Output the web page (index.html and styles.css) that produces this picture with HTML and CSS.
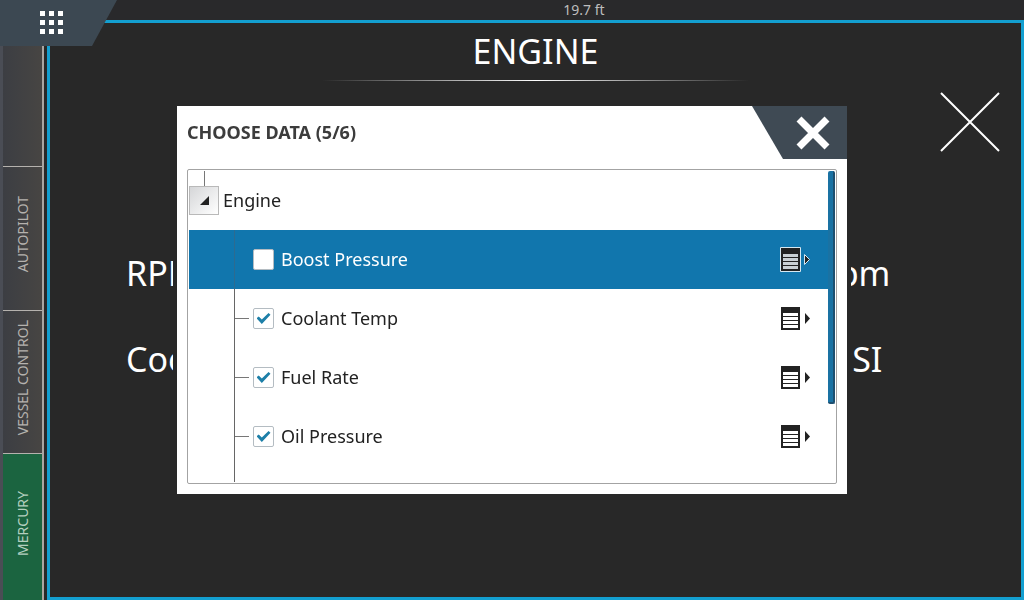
FILE: index.html
```html
<!DOCTYPE html>
<html lang="en">
<head>
    <meta charset="UTF-8">
    <meta name="viewport" content="width=device-width, initial-scale=1">
    <title>Engine</title>
    <link rel="stylesheet" href="styles.css">
</head>
<body>
<header class="top-bar">
    <span class="depth">19.7 ft</span>
</header>
<button class="menu-btn" type="button" aria-label="Menu">
    <svg width="24" height="24" viewBox="0 0 24 24" fill="#fff">
        <path d="M0 0h5v5H0zM9 0h5v5H9zM18 0h5v5h-5zM0 9h5v5H0zM9 9h5v5H9zM18 9h5v5h-5zM0 18h5v5H0zM9 18h5v5H9zM18 18h5v5h-5z"/>
    </svg>
</button>

<div class="screen">
    <nav class="sidebar">
        <span class="tab"></span>
        <button class="tab" type="button"><span>AUTOPILOT</span></button>
        <button class="tab" type="button"><span>VESSEL CONTROL</span></button>
        <button class="tab tab-mercury" type="button"><span>MERCURY</span></button>
    </nav>

    <main class="panel">
        <h1>ENGINE</h1>
        <div class="title-line"></div>
        <button class="panel-close" type="button" aria-label="Close panel">
            <svg width="60" height="60" viewBox="0 0 60 60" stroke="#fff" stroke-width="2">
                <path d="M1 1L59 59M59 1L1 59"/>
            </svg>
        </button>
        <div class="readings">
            <span>RPM</span><span class="unit">rpm</span>
            <span>Coolant</span><span class="unit">PSI</span>
        </div>
    </main>
</div>

<div class="overlay">
    <section class="dialog" role="dialog" aria-labelledby="dialog-title">
        <div class="dialog-head">
            <h2 id="dialog-title">CHOOSE DATA (5/6)</h2>
            <button class="dialog-close" type="button" aria-label="Close">
                <svg width="34" height="34" viewBox="0 0 34 34" stroke="#fff" stroke-width="7">
                    <path d="M3 3L31 31M31 3L3 31"/>
                </svg>
            </button>
        </div>
        <div class="list-box">
            <ul class="list">
                <li class="row row-group">
                    <button class="expander" type="button" aria-label="Collapse Engine">
                        <svg width="9" height="9" viewBox="0 0 9 9" fill="#222"><path d="M9 0V9H0z"/></svg>
                    </button>
                    <span>Engine</span>
                </li>
                <li class="row row-selected">
                    <span class="branch"></span>
                    <label><input type="checkbox">Boost Pressure</label>
                    <button class="options" type="button" aria-label="Boost Pressure options">
                        <svg width="34" height="27" viewBox="0 0 34 27">
                            <path fill="#222" stroke="#d5e8f2" d="M2.5 1.5h20v24h-20z"/>
                            <path fill="#c9d0d4" d="M5 8h15v3H5zM5 12h15v3H5zM5 16h15v3H5zM5 20h15v3H5z"/>
                            <path fill="#222" stroke="#d5e8f2" d="M26.5 8.5v10l5-5z"/>
                        </svg>
                    </button>
                </li>
                <li class="row">
                    <span class="branch"></span>
                    <label><input type="checkbox" checked>Coolant Temp</label>
                    <button class="options" type="button" aria-label="Coolant Temp options">
                        <svg width="34" height="27" viewBox="0 0 34 27" fill="#222">
                            <path d="M3 2h19v23H3z"/>
                            <path fill="#fff" d="M5 8h15v3H5zM5 12h15v3H5zM5 16h15v3H5zM5 20h15v3H5z"/>
                            <path d="M27 8v11l5-5.5z"/>
                        </svg>
                    </button>
                </li>
                <li class="row">
                    <span class="branch"></span>
                    <label><input type="checkbox" checked>Fuel Rate</label>
                    <button class="options" type="button" aria-label="Fuel Rate options">
                        <svg width="34" height="27" viewBox="0 0 34 27" fill="#222">
                            <path d="M3 2h19v23H3z"/>
                            <path fill="#fff" d="M5 8h15v3H5zM5 12h15v3H5zM5 16h15v3H5zM5 20h15v3H5z"/>
                            <path d="M27 8v11l5-5.5z"/>
                        </svg>
                    </button>
                </li>
                <li class="row">
                    <span class="branch"></span>
                    <label><input type="checkbox" checked>Oil Pressure</label>
                    <button class="options" type="button" aria-label="Oil Pressure options">
                        <svg width="34" height="27" viewBox="0 0 34 27" fill="#222">
                            <path d="M3 2h19v23H3z"/>
                            <path fill="#fff" d="M5 8h15v3H5zM5 12h15v3H5zM5 16h15v3H5zM5 20h15v3H5z"/>
                            <path d="M27 8v11l5-5.5z"/>
                        </svg>
                    </button>
                </li>
                <li class="row-tail"></li>
            </ul>
            <div class="scroll-track"><div class="scroll-thumb"></div></div>
        </div>
    </section>
</div>
</body>
</html>
```
FILE: styles.css
```css
* {
    box-sizing: border-box;
}
body {
    margin: 0;
    min-height: 100vh;
    display: flex;
    flex-direction: column;
    background-color: #282828;
    color: #fff;
    font-family: "Noto Sans", sans-serif;
}
button {
    padding: 0;
    border: none;
    background: none;
    color: inherit;
    font-family: inherit;
    cursor: pointer;
}
svg {
    display: block;
}
h1, h2 {
    margin: 0;
}

.top-bar {
    height: 20px;
    padding-left: 144px;
    background-color: #29292b;
    text-align: center;
}
.depth {
    display: block;
    color: #bdbdbd;
    font-size: 14px;
    line-height: 20px;
}
/* sits over the corner of the top bar and sidebar */
.menu-btn {
    position: absolute;
    top: 0;
    left: 0;
    z-index: 1;
    width: 117px;
    height: 46px;
    padding-left: 40px;
    background-color: #3c4852;
    clip-path: polygon(0 0, 100% 0, 92px 100%, 0 100%);
}

.screen {
    flex: 1;
    display: flex;
    gap: 3px;
}
.sidebar {
    width: 44px;
    padding-top: 26px;
    border-left: 3px solid #4a4d55;
    border-right: 2px solid #aaa6a2;
    display: grid;
    grid-template-rows: 121fr 144fr 143fr 146fr;
}
.tab {
    padding-bottom: 8px;
    border-bottom: 1px solid #b5b2ae;
    display: flex;
    align-items: center;
    justify-content: center;
    background: linear-gradient(to right, #3c3e43, #474543);
    color: #b5b2ae;
    font-size: 14px;
    line-height: 20px;
}
.tab span {
    writing-mode: vertical-rl;
    transform: rotate(180deg);
    white-space: nowrap;
}
.tab-mercury {
    border-bottom: none;
    background: #1b6440;
    color: #b3cfbf;
}

.panel {
    position: relative;
    flex: 1;
    border: 3px solid #139fd0;
    display: flex;
    flex-direction: column;
    align-items: center;
}
h1 {
    font-size: 34px;
    font-weight: 400;
    line-height: 57px;
}
.title-line {
    width: 44%;
    height: 1px;
    background: linear-gradient(to right, transparent, #fff, transparent);
}
.panel-close {
    position: absolute;
    top: 69px;
    right: 21px;
}
.readings {
    width: 100%;
    margin-top: 149px;
    padding: 0 114px 0 76px;
    display: grid;
    grid-template-columns: 1fr 100px;
    font-size: 34px;
    line-height: 86px;
}
.unit {
    text-align: center;
}

.overlay {
    position: fixed;
    inset: 0;
    z-index: 2;
    display: flex;
    align-items: center;
    justify-content: center;
}
.dialog {
    width: 90%;
    max-width: 670px;
    background-color: #fff;
    box-shadow: 0 0 0 4px #282828;
    color: #222;
}
.dialog-head {
    display: flex;
    align-items: center;
    justify-content: space-between;
    padding-left: 10px;
}
h2 {
    color: #3c3c3c;
    font-size: 18px;
    font-weight: 700;
    line-height: 27px;
}
.dialog-close {
    width: 95px;
    height: 53px;
    padding-left: 44px;
    background-color: #3f4a54;
    clip-path: polygon(0 0, 100% 0, 100% 100%, 31px 100%);
}
.list-box {
    margin: 10px;
    height: 315px;
    border: 1px solid #a3a3a3;
    border-radius: 2px;
    padding: 1px;
    display: flex;
    overflow: hidden;
}
.list {
    flex: 1;
    margin: 0;
    padding: 0;
    display: flex;
    flex-direction: column;
    list-style: none;
    font-size: 18px;
    line-height: 27px;
}
.row {
    height: 59px;
    padding-left: 45px;
    padding-right: 16px;
    display: flex;
    align-items: center;
    gap: 4px;
}
.row-group {
    padding-left: 0;
    /* stub of the tree line above the expander */
    background: linear-gradient(#777, #777) 15px 0 / 1px 15px no-repeat;
}
.row-selected {
    background-color: #1176ad;
    color: #fff;
}
.expander {
    width: 30px;
    height: 29px;
    border: 1px solid #b9b9b9;
    display: flex;
    align-items: center;
    justify-content: center;
    background: linear-gradient(135deg, #d5d6d8, #fff);
}
.branch {
    width: 15px;
    height: 100%;
    border-left: 1px solid #666;
    background: linear-gradient(#777, #777) 0 50% / 100% 1px no-repeat;
}
.row-selected .branch {
    border-color: #2d6b90;
    background: none;
}
.row label {
    flex: 1;
    display: flex;
    align-items: center;
    gap: 7px;
}
.row input {
    appearance: none;
    width: 21px;
    height: 21px;
    margin: 0;
    border: 1px solid #b4bcc2;
    border-radius: 2px;
    display: grid;
    place-items: center;
    background-color: #fff;
}
.row input:checked::before {
    content: "";
    width: 14px;
    height: 11px;
    background-color: #1d7fa8;
    clip-path: polygon(0 48%, 16% 32%, 38% 58%, 86% 0, 100% 16%, 38% 100%);
}
.row-tail {
    flex: 1;
    margin-left: 45px;
    border-left: 1px solid #666;
}
.scroll-track {
    width: 7px;
}
.scroll-thumb {
    height: 75%;
    border-right: 2px solid #1d4f70;
    border-bottom: 2px solid #1d4f70;
    border-radius: 2px;
    background-color: #1a72a3;
}
```
